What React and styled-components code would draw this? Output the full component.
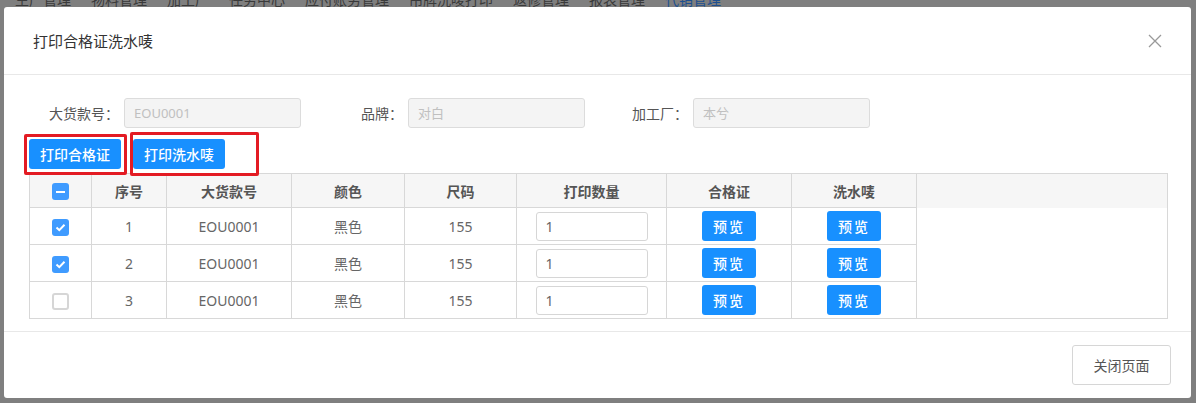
import React from "react";
import styled, { createGlobalStyle } from "styled-components";

const GlobalStyle = createGlobalStyle`
  html, body {
    margin: 0;
    padding: 0;
    background: #7f7f7f;
    font-family: "Noto Sans", "Noto Sans CJK SC", sans-serif;
  }
  * { box-sizing: border-box; }
`;

const Page = styled.div`
  width: 1196px;
  height: 403px;
  overflow: hidden;
  background: #7f7f7f;
`;

const NavStrip = styled.div`
  height: 7px;
  overflow: hidden;
  display: flex;
  gap: 20px;
  padding-left: 15px;
`;

const NavItem = styled.span`
  font-size: 14px;
  line-height: 14px;
  margin-top: -7px;
  color: ${props => (props.active ? "#1d4f8f" : "#3a3a3a")};
  white-space: nowrap;
`;

const Dialog = styled.div`
  margin-left: 4px;
  width: 1187px;
  height: 391px;
  background: #fff;
  border-radius: 3px;
  display: flex;
  flex-direction: column;
`;

const Header = styled.div`
  height: 68px;
  flex-shrink: 0;
  display: flex;
  align-items: center;
  justify-content: space-between;
  padding: 0 29px 0 29px;
  border-bottom: 1px solid #e8e8e8;
`;

const Title = styled.h3`
  margin: 0;
  font-size: 15px;
  font-weight: 400;
  color: #333;
`;

const Body = styled.div`
  flex: 1;
  padding: 23px 24px 0 25px;
  border-bottom: 1px solid #e8e8e8;
`;

const FormRow = styled.div`
  display: flex;
  align-items: center;
  height: 30px;
`;

const Field = styled.div`
  display: flex;
  align-items: center;
  width: ${props => props.width}px;
`;

const Label = styled.label`
  width: ${props => props.width}px;
  text-align: right;
  padding-right: 5px;
  font-family: "Noto Sans CJK SC", sans-serif;
  font-size: 14px;
  color: #555;
  white-space: nowrap;
`;

const ReadInput = styled.input`
  width: 177px;
  height: 30px;
  padding: 0 9px;
  border: 1px solid #dcdcdc;
  border-radius: 3px;
  background: #f4f4f4;
  font-family: inherit;
  font-size: 13px;
  color: #bbb;
  outline: none;
  &::placeholder { color: #c0c0c0; }
`;

const ActionRow = styled.div`
  display: flex;
  align-items: flex-start;
  height: 40px;
  margin-top: 5px;
  margin-left: -5px;
`;

const Mark = styled.div`
  position: relative;
  z-index: 1;
  flex-shrink: 0;
  border: 3px solid #e31b23;
  border-radius: 2px;
  padding: ${props => props.pad};
  height: ${props => props.h}px;
  width: ${props => props.w}px;
  margin-top: ${props => props.top}px;
  margin-left: ${props => props.left || 0}px;
`;

const PrimaryButton = styled.button`
  height: 30px;
  padding: 0 ${props => props.px || 9}px;
  border: none;
  border-radius: 3px;
  background: #1890ff;
  color: #fff;
  font-family: inherit;
  font-size: 14px;
  font-weight: 500;
  letter-spacing: ${props => props.spacing || 0}px;
  cursor: pointer;
  white-space: nowrap;
`;

const Table = styled.table`
  width: 1139px;
  border-collapse: collapse;
  table-layout: fixed;
  border: 1px solid #d8d8d8;
  font-size: 14px;
`;

const Th = styled.th`
  height: 34px;
  background: #f6f6f6;
  border: 1px solid #d8d8d8;
  color: #555;
  font-weight: 700;
  padding: 0;
`;

const Td = styled.td`
  height: 37px;
  border: 1px solid #d8d8d8;
  text-align: center;
  color: #666;
  padding: 0;
`;

const FillerTh = styled.th`
  background: #f6f6f6;
  border-top: 1px solid #d8d8d8;
  border-left: 1px solid #d8d8d8;
`;

const FillerTd = styled.td`
  border-left: 1px solid #d8d8d8;
  background: #fff;
`;

const Box = styled.span`
  display: inline-flex;
  align-items: center;
  justify-content: center;
  width: 17px;
  height: 17px;
  border-radius: 3px;
  vertical-align: middle;
  background: ${props => (props.on ? "#3f9bff" : "#fff")};
  border: ${props => (props.on ? "none" : "2px solid #d6d6d6")};
`;

const QtyInput = styled.input`
  width: 112px;
  height: 29px;
  padding: 0 9px;
  border: 1px solid #d6d6d6;
  border-radius: 3px;
  font-family: inherit;
  font-size: 14px;
  color: #666;
  outline: none;
`;

const Footer = styled.div`
  height: 66px;
  flex-shrink: 0;
  display: flex;
  justify-content: flex-end;
  align-items: center;
  padding-right: 20px;
`;

const GhostButton = styled.button`
  width: 99px;
  height: 40px;
  border: 1px solid #d6d6d6;
  border-radius: 3px;
  background: #fff;
  color: #555;
  font-family: inherit;
  font-size: 14px;
`;

const CloseIcon = () => (
  <svg width="14" height="14" viewBox="0 0 14 14">
    <path d="M1 1 L13 13 M13 1 L1 13" stroke="#999" strokeWidth="1.3" fill="none" />
  </svg>
);

const Check = ({ state }) => (
  <Box on={state !== "off" ? 1 : 0}>
    {state === "on" && (
      <svg width="11" height="9" viewBox="0 0 11 9">
        <path d="M1.5 4.5 L4.3 7.2 L9.5 1.8" stroke="#fff" strokeWidth="2" fill="none" />
      </svg>
    )}
    {state === "mixed" && <span style={{ width: 9, height: 2, background: "#fff" }} />}
  </Box>
);

const navItems = ["生产管理", "物料管理", "加工厂", "任务中心", "应付账务管理", "吊牌洗唛打印", "返修管理", "报表管理", "代销管理"];

const columns = [
  { title: "", width: 62 },
  { title: "序号", width: 75 },
  { title: "大货款号", width: 125 },
  { title: "颜色", width: 113 },
  { title: "尺码", width: 112 },
  { title: "打印数量", width: 150 },
  { title: "合格证", width: 125 },
  { title: "洗水唛", width: 125 },
];

const rows = [
  { no: 1, code: "EOU0001", color: "黑色", size: 155, qty: 1, checked: true },
  { no: 2, code: "EOU0001", color: "黑色", size: 155, qty: 1, checked: true },
  { no: 3, code: "EOU0001", color: "黑色", size: 155, qty: 1, checked: false },
];

const App = () => (
  <Page>
    <GlobalStyle />
    <NavStrip>
      {navItems.map((n, i) => (
        <NavItem key={n} active={i === navItems.length - 1}>{n}</NavItem>
      ))}
    </NavStrip>
    <Dialog>
      <Header>
        <Title>打印合格证洗水唛</Title>
        <CloseIcon />
      </Header>
      <Body>
        <FormRow>
          <Field width={329}>
            <Label width={95}>大货款号：</Label>
            <ReadInput readOnly placeholder="EOU0001" />
          </Field>
          <Field width={273}>
            <Label width={50}>品牌：</Label>
            <ReadInput readOnly placeholder="对白" />
          </Field>
          <Field width={300}>
            <Label width={62}>加工厂：</Label>
            <ReadInput readOnly placeholder="本兮" />
          </Field>
        </FormRow>
        <ActionRow>
          <Mark w={103} h={41} top={1} pad="2px 0 0 2px">
            <PrimaryButton px={11}>打印合格证</PrimaryButton>
          </Mark>
          <Mark w={129} h={44} top={-1} left={3} pad="4px 0 0 0">
            <PrimaryButton px={11}>打印洗水唛</PrimaryButton>
          </Mark>
        </ActionRow>
        <Table>
          <colgroup>
            {columns.map((c, i) => <col key={i} style={{ width: c.width }} />)}
            <col />
          </colgroup>
          <thead>
            <tr>
              {columns.map((c, i) => (
                <Th key={i}>{i === 0 ? <Check state="mixed" /> : c.title}</Th>
              ))}
              <FillerTh />
            </tr>
          </thead>
          <tbody>
            {rows.map(r => (
              <tr key={r.no}>
                <Td><Check state={r.checked ? "on" : "off"} /></Td>
                <Td>{r.no}</Td>
                <Td>{r.code}</Td>
                <Td>{r.color}</Td>
                <Td>{r.size}</Td>
                <Td><QtyInput defaultValue={r.qty} /></Td>
                <Td><PrimaryButton px={11} spacing={2}>预览</PrimaryButton></Td>
                <Td><PrimaryButton px={11} spacing={2}>预览</PrimaryButton></Td>
                <FillerTd />
              </tr>
            ))}
          </tbody>
        </Table>
      </Body>
      <Footer>
        <GhostButton>关闭页面</GhostButton>
      </Footer>
    </Dialog>
  </Page>
);

export default App;
